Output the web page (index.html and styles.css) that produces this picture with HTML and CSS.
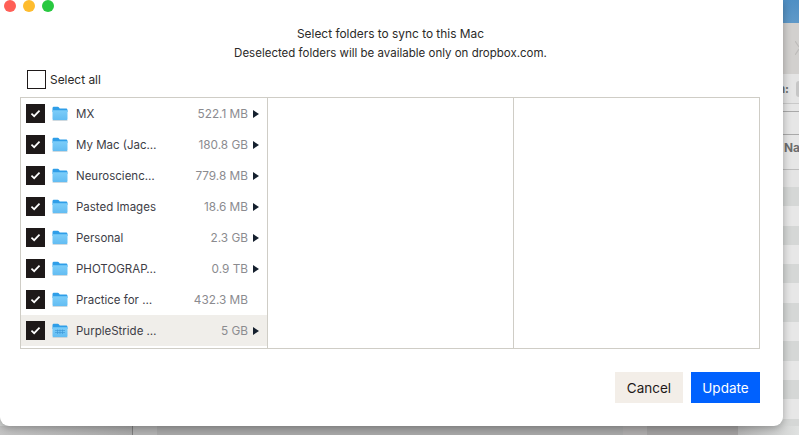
FILE: index.html
```html
<!DOCTYPE html>
<html lang="en">
<head>
  <meta charset="UTF-8" />
  <title>Selective Sync</title>
  <link rel="stylesheet" href="styles.css">
</head>
<body>

  <!-- Window behind the dialog, only its edges show -->
  <div class="backdrop">
    <div class="bg-blue"></div>
    <div class="bg-toolbar">
      <svg class="bg-x" viewBox="0 0 4 14"><path d="M0 0 4 6M4 8 0 14"/></svg>
    </div>
    <div class="bg-filter"><span class="bg-label">n:</span><span class="bg-pill"></span></div>
    <div class="bg-line-a"></div>
    <div class="bg-line-b"></div>
    <div class="bg-head">Name</div>
    <div class="bg-gap"></div>
    <div class="bg-stripes"></div>
    <div class="bg-bottom">
      <span class="seg seg-a"></span>
      <span class="seg seg-b"></span>
      <span class="seg seg-c"></span>
      <span class="seg seg-d"></span>
      <span class="seg seg-e"></span>
      <span class="seg seg-f"></span>
    </div>
  </div>

  <div class="dialog">
    <div class="traffic">
      <span class="light red"></span>
      <span class="light yellow"></span>
      <span class="light green"></span>
    </div>

    <h1>Select folders to sync to this Mac</h1>
    <p class="subtitle">Deselected folders will be available only on dropbox.com.</p>

    <label class="select-all"><span class="box"></span>Select all</label>

    <div class="browser">
      <div class="column">
        <div class="row">
          <span class="check"><svg viewBox="0 0 12 10"><path d="M1.5 5.2 4.5 8 10.5 1.8"/></svg></span>
          <svg class="folder" viewBox="0 0 16 15"><use href="#folder"/></svg>
          <span class="name">MX</span><span class="size">522.1 MB</span><span class="arrow"></span>
        </div>
        <div class="row">
          <span class="check"><svg viewBox="0 0 12 10"><path d="M1.5 5.2 4.5 8 10.5 1.8"/></svg></span>
          <svg class="folder" viewBox="0 0 16 15"><use href="#folder"/></svg>
          <span class="name">My Mac (Jac…</span><span class="size">180.8 GB</span><span class="arrow"></span>
        </div>
        <div class="row">
          <span class="check"><svg viewBox="0 0 12 10"><path d="M1.5 5.2 4.5 8 10.5 1.8"/></svg></span>
          <svg class="folder" viewBox="0 0 16 15"><use href="#folder"/></svg>
          <span class="name">Neuroscienc…</span><span class="size">779.8 MB</span><span class="arrow"></span>
        </div>
        <div class="row">
          <span class="check"><svg viewBox="0 0 12 10"><path d="M1.5 5.2 4.5 8 10.5 1.8"/></svg></span>
          <svg class="folder" viewBox="0 0 16 15"><use href="#folder"/></svg>
          <span class="name">Pasted Images</span><span class="size">18.6 MB</span><span class="arrow"></span>
        </div>
        <div class="row">
          <span class="check"><svg viewBox="0 0 12 10"><path d="M1.5 5.2 4.5 8 10.5 1.8"/></svg></span>
          <svg class="folder" viewBox="0 0 16 15"><use href="#folder"/></svg>
          <span class="name">Personal</span><span class="size">2.3 GB</span><span class="arrow"></span>
        </div>
        <div class="row">
          <span class="check"><svg viewBox="0 0 12 10"><path d="M1.5 5.2 4.5 8 10.5 1.8"/></svg></span>
          <svg class="folder" viewBox="0 0 16 15"><use href="#folder"/></svg>
          <span class="name">PHOTOGRAP…</span><span class="size">0.9 TB</span><span class="arrow"></span>
        </div>
        <div class="row">
          <span class="check"><svg viewBox="0 0 12 10"><path d="M1.5 5.2 4.5 8 10.5 1.8"/></svg></span>
          <svg class="folder" viewBox="0 0 16 15"><use href="#folder"/></svg>
          <span class="name">Practice for …</span><span class="size">432.3 MB</span><span class="arrow none"></span>
        </div>
        <div class="row active">
          <span class="check"><svg viewBox="0 0 12 10"><path d="M1.5 5.2 4.5 8 10.5 1.8"/></svg></span>
          <svg class="folder" viewBox="0 0 16 15">
            <use href="#folder"/>
            <path class="grid" d="M3 7.5h10M3 9.5h10M5.5 6.5v4.5M8 6.5v4.5M10.5 6.5v4.5"/>
          </svg>
          <span class="name">PurpleStride …</span><span class="size">5 GB</span><span class="arrow"></span>
        </div>
      </div>
      <div class="column"></div>
      <div class="column"></div>
    </div>

    <div class="actions">
      <button class="btn cancel">Cancel</button>
      <button class="btn update">Update</button>
    </div>
  </div>

  <svg class="defs" width="0" height="0">
    <defs>
      <linearGradient id="folderBody" x1="0" y1="0" x2="0" y2="1">
        <stop offset="0" stop-color="#7ccdf9"/>
        <stop offset="1" stop-color="#62bcf2"/>
      </linearGradient>
      <g id="folder">
        <path d="M.5 2.2C.5 1.2 1.1.7 2 .7h3.7c.7 0 1 .3 1.5 1l.5.7h6.3c.9 0 1.5.6 1.5 1.5V6H.5z" fill="#2f9ee8"/>
        <path d="M.5 4.2h15v8.6c0 1-.6 1.5-1.5 1.5H2c-.9 0-1.5-.5-1.5-1.5z" fill="url(#folderBody)"/>
        <path d="M.5 14.6h15" stroke="#c9cdd0" stroke-width=".7"/>
      </g>
    </defs>
  </svg>

</body>
</html>
```

FILE: styles.css
```css
* {
  box-sizing: border-box;
}

body {
  margin: 0;
  width: 799px;
  height: 435px;
  overflow: hidden;
  position: relative;
  font-family: Inter, "Liberation Sans", sans-serif;
  font-size: 11.9px;
  color: #2b2a28;
}

/* Window behind */
.backdrop {
  height: 435px;
  display: flex;
  flex-direction: column;
  background: #e2e2e2;
  color: #6d6d6d;
  font-weight: 700;
}

.bg-blue {
  height: 23px;
  background: linear-gradient(#4f8fc4, #5f99c8);
}

.bg-toolbar {
  height: 51px;
  background: #d2d0ce;
  display: flex;
  justify-content: flex-end;
  align-items: center;
}

.bg-x {
  width: 4px;
  height: 14px;
  margin-top: -1px;
  fill: none;
  stroke: #bdbbb9;
  stroke-width: 1.2;
}

.bg-filter {
  height: 30px;
  display: flex;
  align-items: center;
  justify-content: flex-end;
  gap: 7px;
  background: #e4e4e4;
  border-bottom: 1px solid #c9c9c9;
}

.bg-pill {
  width: 3px;
  height: 16px;
  background: #c6c6c6;
  border-radius: 3px 0 0 3px;
}

.bg-line-a {
  height: 8px;
  border-bottom: 1px solid #a9a9a9;
  background: #e6e6e6;
}

.bg-line-b {
  height: 23px;
  background: #e6e6e6;
  border-bottom: 1px solid #a9a9a9;
  box-shadow: 0 8px 0 #e6e6e6, 0 9px 0 #c9c9c9;
}

.bg-head {
  height: 35px;
  padding-left: 784px;
  white-space: nowrap;
  line-height: 26px;
  background: #e6e6e6;
  border-bottom: 1px solid #bdbdbd;
}

.bg-gap {
  height: 17px;
  background: #e4e4e4;
}

.bg-stripes {
  flex: 1;
  background: repeating-linear-gradient(#d5d7d6 0, #d5d7d6 19.3px, #e7e7e7 19.3px, #e7e7e7 38.6px);
}

.bg-bottom {
  height: 9px;
  display: flex;
}

.seg {
  display: block;
}

.seg-a {
  width: 133px;
  background: linear-gradient(90deg, #c4c4c4, #aaaaaa);
  border-right: 1px solid #7e7e7e;
}

.seg-b {
  width: 24px;
  background: #b2b2b2;
}

.seg-c {
  width: 466px;
  background: #a8a8a8;
}

.seg-d {
  width: 24px;
  background: #aeacac;
}

.seg-e {
  width: 91px;
  background: #a2a0a0;
}

.seg-f {
  flex: 1;
  background: linear-gradient(90deg, #b4b4b4, #e0e2e1);
}

/* Dialog sits on top of the window */
.dialog {
  position: absolute;
  top: 0;
  left: 0;
  width: 783px;
  height: 426px;
  background: #fff;
  border-radius: 0 0 9px 9px;
  box-shadow: 0 2px 8px rgba(0, 0, 0, 0.3);
  display: flex;
  flex-direction: column;
}

.traffic {
  display: flex;
  gap: 7px;
  padding-left: 4px;
  height: 12px;
}

.light {
  width: 12px;
  height: 12px;
  border-radius: 50%;
}

.red { background: #ff5f57; }
.yellow { background: #febc2e; }
.green { background: #28c840; }

h1 {
  margin: 14px 2px 0 0;
  height: 15px;
  line-height: 15px;
  font-size: 11.9px;
  font-weight: 400;
  text-align: center;
}

.subtitle {
  margin: 5px 2px 0 0;
  height: 15px;
  line-height: 15px;
  font-size: 11.5px;
  text-align: center;
}

.select-all {
  display: flex;
  align-items: center;
  gap: 4px;
  margin: 9px 0 0 27px;
  height: 19px;
}

.box {
  width: 19px;
  height: 19px;
  border: 1px solid #1e1919;
}

.browser {
  display: flex;
  margin: 8px 23px 0 20px;
  height: 252px;
  border: 1px solid #cfcdc6;
  border-top-width: 1.5px;
}

.column {
  width: 246px;
  border-right: 1px solid #cfcdc6;
  display: flex;
  flex-direction: column;
}

.column:first-child {
  width: 247px;
}

.column:last-child {
  flex: 1;
  border-right: none;
}

.row {
  height: 31px;
  display: flex;
  align-items: center;
  padding-left: 5px;
  flex-shrink: 0;
}

.row.active {
  background: #f0eeea;
}

.check {
  width: 19px;
  height: 19px;
  background: #1e1919;
  display: flex;
  align-items: center;
  justify-content: center;
  flex-shrink: 0;
}

.check svg {
  width: 11px;
  height: 9px;
  fill: none;
  stroke: #fff;
  stroke-width: 1.9;
}

.folder {
  width: 16px;
  height: 15px;
  margin-left: 7px;
  flex-shrink: 0;
}

.grid {
  fill: none;
  stroke: #3f9ad8;
  stroke-width: 0.7;
}

.name {
  margin-left: 8px;
  font-size: 11.5px;
  color: #3d3d46;
  white-space: nowrap;
}

.size {
  margin-left: auto;
  font-size: 11.8px;
  color: #8b8b8f;
  white-space: nowrap;
}

.arrow {
  width: 0;
  height: 0;
  margin: 0 8px 0 5px;
  border-left: 6px solid #15202e;
  border-top: 4px solid transparent;
  border-bottom: 4px solid transparent;
}

.arrow.none {
  border-left-color: transparent;
}

.actions {
  display: flex;
  justify-content: flex-end;
  gap: 8px;
  margin: 23px 23px 0 0;
}

.btn {
  height: 31px;
  border: none;
  font-family: inherit;
  font-size: 13.5px;
  cursor: pointer;
  padding: 0;
}

.cancel {
  width: 68px;
  background: #f3eee8;
  color: #1e1919;
}

.update {
  width: 69px;
  background: #0061fe;
  color: #fff;
}

.defs {
  position: absolute;
}
```
